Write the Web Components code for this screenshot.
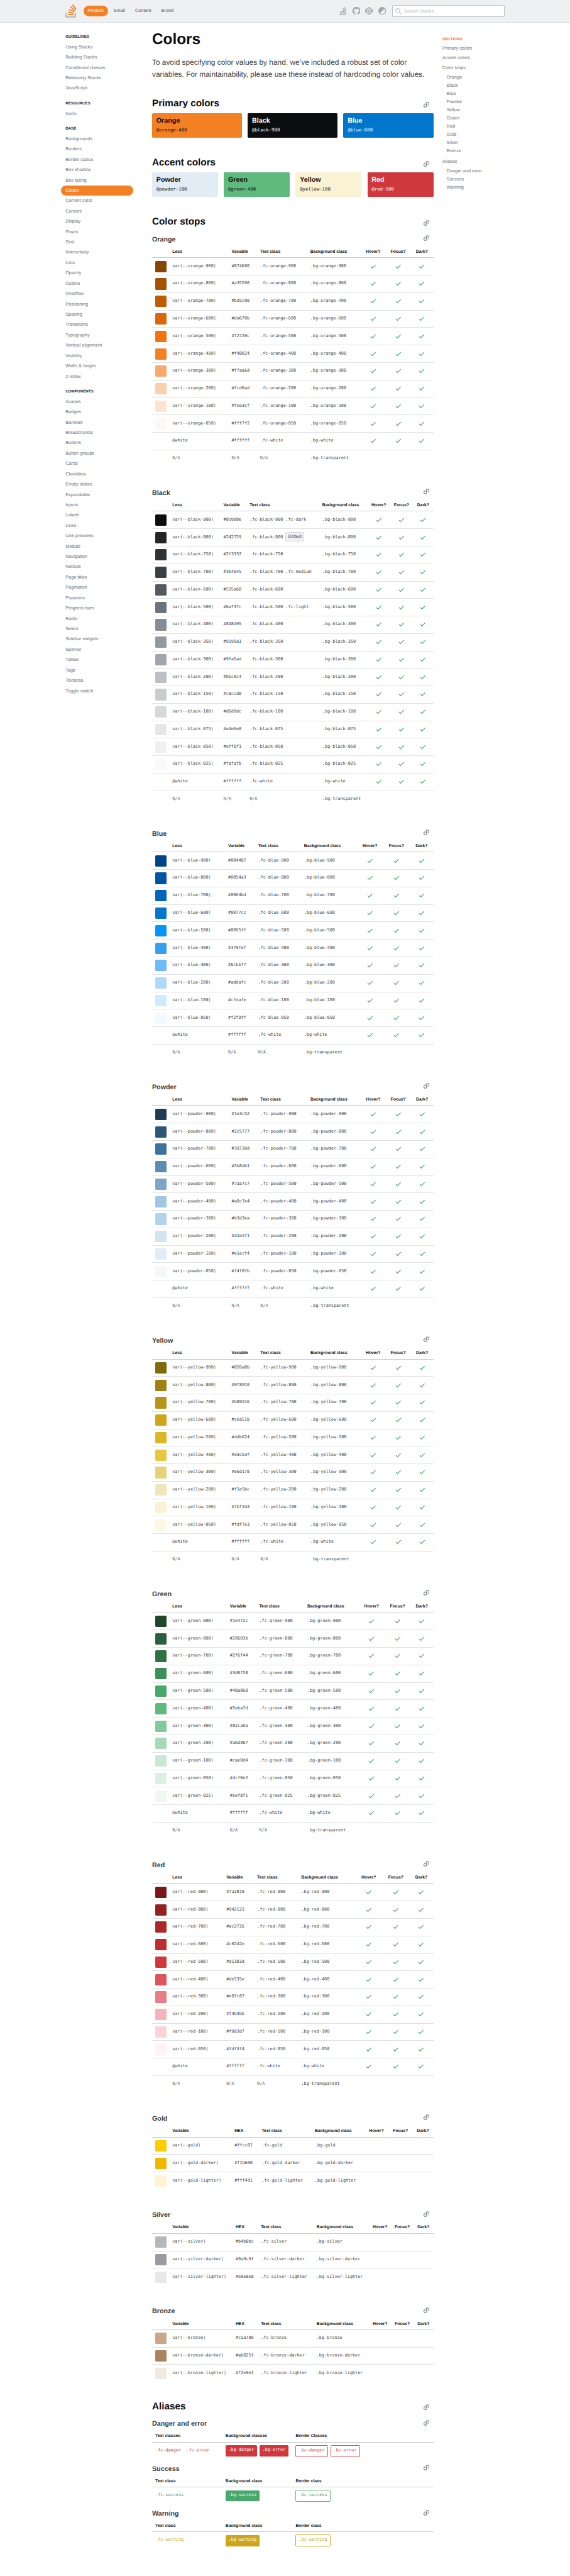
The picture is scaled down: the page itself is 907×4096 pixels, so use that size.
<!DOCTYPE html>
<html lang="en">
<head>
<meta charset="utf-8">
<title>Colors - Stacks</title>
<style>
html{background:#fff}
body{margin:0;font:13px/1.3 "Liberation Sans",Arial,sans-serif;color:#3b4045;text-rendering:geometricPrecision}
</style>
</head>
<body>
<stacks-page></stacks-page>
<script>
const SANS = '"Liberation Sans",Arial,sans-serif';
const MONO = '"DejaVu Sans Mono","Liberation Mono",monospace';
const LOOP = 'M13 9.700C15.500 7 15.800 4 13.600 2.200 11.300.400 8.600 1.400 7.100 3.800 5.700 6.300 6.300 8.700 8.800 9.700';
const LINK = `<svg width="16" height="16" viewBox="0 0 16 16" fill="none" stroke="#6a737c" stroke-width="1.9"><path d="${LOOP}"/><path transform="rotate(180 8 8)" d="${LOOP}"/></svg>`;
const CHECK = '<svg width="18" height="18" viewBox="0 0 18 18"><path fill="#48a868" d="M16 4.410L14.590 3 6 11.590 2.410 8 1 9.410l5 5 10-10z"/></svg>';

function define(name, render) {
  customElements.define(name, class extends HTMLElement {
    connectedCallback() {
      if (this.shadowRoot) return;
      const t = document.createElement('template');
      t.innerHTML = render(this);
      this.attachShadow({ mode: 'open' }).append(t.content.cloneNode(true));
    }
  });
}

/* Top bar */
define('stacks-topbar', () => `<style>
:host{display:flex;align-items:center;box-sizing:border-box;height:64px;background:#eff0f1;border-bottom:1px solid #d6d9dc;padding-left:183px}
.logo{display:block;width:32px;height:37px}
nav{display:flex;gap:4px;margin-left:19px}
nav a{font-size:13px;line-height:29px;padding:0 12px;border-radius:100px;color:#535a60}
nav a.on{background:#f48024;color:#fff}
.icons{display:flex;align-items:center;gap:14px;margin-left:auto}
.icons svg{display:block;width:22px;height:22px}
.search{display:flex;align-items:center;box-sizing:border-box;width:316px;height:33px;margin:0 184px 0 17px;border:1px solid #bbc0c4;border-radius:3px;background:#fff;padding-left:8px;gap:6px;color:#bbc0c4;font-size:13px}
</style>
<svg class="logo" viewBox="0 0 32 37"><path d="M26 33v-9h4v13H0V24h4v9h22z" fill="#BCBBBB"/><path d="M21.500 0l-2.700 2 9.900 13.300 2.700-2L21.500 0zM26 18.400L13.300 7.800l2.100-2.500 12.700 10.600-2.100 2.500zM9.100 15.200l15 7 1.400-3-15-7-1.400 3zm14 10.790l.680-2.950-16.100-3.350L7 23l16.100 2.990zM23 30H7v-3h16v3z" fill="#F48024"/></svg>
<nav><a class="on">Product</a><a>Email</a><a>Content</a><a>Brand</a></nav>
<div class="icons">
<svg viewBox="0.700 0.700 17.300 17.300" fill="#9fa6ad"><path d="M14 16v-5h2v7H2v-7h2v5h10z"/><path d="M12.090.720l-1.210.9 4.500 6.070 1.220-.9L12.090.710zM5 15h8v-2H5v2zm9.150-5.870L8.350 4.300l.960-1.160 5.800 4.830-.960 1.160zm-7.700-1.470l6.850 3.190.630-1.370-6.850-3.200-.630 1.380zm6.530 5L5.400 11.390l.380-1.670 7.420 1.480-.220 1.460z"/></svg>
<svg viewBox="1 1 16 16" fill="#9fa6ad"><path d="M9 1a8 8 0 00-2.530 15.590c.4.070.550-.170.550-.380l-.010-1.490c-2.010.370-2.530-.490-2.690-.940-.090-.230-.480-.940-.820-1.130-.280-.150-.680-.520-.010-.530.630-.010 1.080.580 1.230.820.720 1.210 1.870.870 2.330.660.070-.520.280-.870.510-1.070-1.780-.2-3.640-.890-3.640-3.950 0-.870.310-1.590.820-2.150-.080-.2-.360-1.020.080-2.120 0 0 .670-.210 2.200.820a7.420 7.420 0 014 0c1.530-1.040 2.200-.820 2.200-.820.440 1.100.160 1.920.080 2.120.510.560.820 1.270.820 2.150 0 3.070-1.870 3.750-3.650 3.950.290.250.540.730.540 1.480l-.010 2.200c0 .210.150.460.550.380A8.010 8.010 0 009 1z"/></svg>
<svg viewBox="0 0 22 22" fill="none" stroke="#9fa6ad" stroke-width="2" stroke-linejoin="round"><path d="M11 1.200L20.800 7.500v7L11 20.800 1.200 14.500v-7zM11 1.200v6.600M11 14.200v6.600M1.200 7.500l9.800 6.700 9.800-6.700M1.200 14.500L11 7.800l9.800 6.700"/></svg>
<svg viewBox="0 0 22 22" fill="#9fa6ad"><circle cx="11" cy="11" r="9.900" fill="none" stroke="#9fa6ad" stroke-width="2"/><path d="M4 18A9.900 9.900 0 0118 4z"/></svg>
</div>
<div class="search"><svg width="18" height="18" viewBox="0 0 18 18" fill="#bbc0c4"><path d="M18 16.500l-5.140-5.180h-.350a7 7 0 10-1.190 1.190v.350L16.500 18l1.500-1.500zM12 7A5 5 0 112 7a5 5 0 0110 0z"/></svg><span>Search Stacks…</span></div>`);

/* Left navigation: one titled group; the active entry is a pill */
define('nav-group', el => `<style>
:host{display:block}
h4{margin:0;padding:22px 12px 6px;font:bold 11px/14px ${SANS};color:#242729;text-transform:uppercase}
a{display:block;height:29px;line-height:29px;padding:0 12px;font-size:13px;color:#6a737c;border-radius:100px}
a.on{background:#f48024;color:#fff}
</style><h4>${el.getAttribute('label')}</h4>` +
  el.getAttribute('items').split(',').map(i => `<a${i === 'Colors' ? ' class="on"' : ''}>${i.replace('&', '&amp;')}</a>`).join(''));

/* Right table of contents */
define('page-toc', () => `<style>
:host{display:block;color:#6a737c;font-size:13px}
h4{margin:0 0 3.700px;font:bold 11px/14px ${SANS};color:#f2720c}
a{display:block;line-height:27px}
div{padding:2px 0 4px 12px}
div a{line-height:23px}
</style><h4>SECTIONS</h4><a>Primary colors</a><a>Accent colors</a><a>Color stops</a>
<div>${'Orange,Black,Blue,Powder,Yellow,Green,Red,Gold,Silver,Bronze'.split(',').map(t => `<a>${t}</a>`).join('')}</div>
<a>Aliases</a><div><a>Danger and error</a><a>Success</a><a>Warning</a></div>`);

/* Headings with an anchor link */
define('section-heading', () => `<style>
:host{display:flex;align-items:center;justify-content:space-between;height:30px;font:bold 27px/30px ${SANS};color:#0c0d0e;padding-right:11px}
:host([small]){height:20px;font-size:19px;line-height:20px;color:#3b4045}
svg{display:block;margin-top:4.500px}
:host([small]) svg{margin:0 0 9px}
</style><span><slot></slot></span>${LINK}`);

/* Large color card */
define('color-card', () => `<style>
:host{display:block;flex:1;box-sizing:border-box;height:69px;padding:11px 12px 0;border-radius:3px}
b{display:block;font:bold 19px/24px ${SANS}}
code{display:block;margin-top:3.500px;font:13px/20px ${MONO}}
</style><b><slot></slot></b><code><slot name="var"></slot></code>`);

/* Table of stops. cols: [variable, text class, background class, hover, focus, dark] x positions;
   the first three are left edges, the last three are column centers. */
const X0 = 427, X1 = 1217;
define('stop-table', el => {
  const name = el.getAttribute('name');
  const [v, t, b, h, f, d] = el.getAttribute('cols').split(' ').map(Number);
  const ds = 2 * d - X1, fs = 2 * f - ds, hs = 2 * h - fs;
  const cols = [57, v - X0 - 57, t - v, b - t, hs - b, fs - hs, ds - fs, X1 - ds].map(n => n.toFixed(1) + 'px').join(' ');
  const metal = el.hasAttribute('metal');
  const extra = { 'black-900': ' .fc-dark', 'black-700': ' .fc-medium', 'black-500': ' .fc-light', 'black-800': ' <span class="tag">Default</span>' };
  const checks = `<i>${CHECK}</i>`.repeat(3);
  let rows = el.getAttribute('stops').split(' ').map(s => {
    const [stop, hex] = s.split(':');
    const full = stop ? name + '-' + stop : name;
    return `<div class="row"><span class="sw" style="background:#${hex}"></span><code>var(--${full})</code><code>#${hex}</code><code>.fc-${full}${extra[full] || ''}</code><code>.bg-${full}</code>${metal ? '<i></i><i></i><i></i>' : checks}</div>`;
  }).join('');
  if (!metal) rows += `<div class="row"><span></span><code>@white</code><code>#ffffff</code><code>.fc-white</code><code>.bg-white</code>${checks}</div>
<div class="row"><span></span><code class="na">N/A</code><code class="na">N/A</code><code class="na">N/A</code><code>.bg-transparent</code><i></i><i></i><i></i></div>`;
  return `<style>
:host{display:block;margin:8.500px 0 62.900px}
.row{display:grid;grid-template-columns:${cols};align-items:center;box-sizing:border-box;height:49px;border-bottom:1px solid #e0e2e5}
.row:last-child{height:48px;border-bottom:0}
.row.head{height:33px;border-bottom-color:#c9cdd0;font:bold 12px/16px ${SANS};color:#0c0d0e}
.sw{width:32px;height:32px;margin-left:9px;border-radius:3px}
code{font:12px/16px ${MONO};color:#3b4045;padding-bottom:2px;white-space:pre}
code.na{color:#6a737c}
i{display:flex;justify-content:center}
.c{text-align:center}
svg{display:block}
.tag{display:inline-block;box-sizing:border-box;height:26px;margin:-6px 0;vertical-align:middle;font:12px/23px ${SANS};padding:0 5px;border:1px solid #d6d9dc;border-radius:3px;background:#eff0f1}
</style>
<div class="row head"><span></span><span>${metal ? 'Variable' : 'Less'}</span><span>${metal ? 'HEX' : 'Variable'}</span><span>Text class</span><span>Background class</span><span class="c">Hover?</span><span class="c">Focus?</span><span class="c">Dark?</span></div>${rows}`;
});

/* Alias table */
define('alias-table', el => {
  const names = el.getAttribute('names').split(' ');
  const [p, q, r] = el.getAttribute('heads').split(',');
  return `<style>
:host{display:block;margin:7.300px 0 17.500px}
.row{display:grid;grid-template-columns:197.300px 197px 1fr;padding-left:9px;align-items:center;box-sizing:border-box;height:48.200px}
.row.head{height:33px;border-bottom:1px solid #c9cdd0;font:bold 12px/16px ${SANS};color:#0c0d0e}
div div{display:flex;gap:7.200px;font:12px/28px ${MONO};color:${el.getAttribute('fc')}}
div .t{gap:15.200px;padding-bottom:2px}
.b span{background:${el.getAttribute('bg')};color:#fff;padding:0 8px 3px;border-radius:3px}
.o span{border:1px solid ${el.getAttribute('bc')};padding:0 7.200px 2px;border-radius:3px}
</style>
<div class="row head"><span>${p}</span><span>${q}</span><span>${r}</span></div>
<div class="row"><div class="t">${names.map(n => `<span>.fc-${n}</span>`).join('')}</div><div class="b">${names.map(n => `<span>.bg-${n}</span>`).join('')}</div><div class="o">${names.map(n => `<span>.bc-${n}</span>`).join('')}</div></div>`;
});

const TABLES = [
 ['Orange','650.3 730.3 871.300 1047.800 1118.300 1184.900','900:874600 800:a35200 700:bd5c00 600:da670b 500:f2720c 400:f48024 300:f7aa6d 200:fcd0ad 100:fee3cf 050:fff7f2'],
 ['Black','627.500 700.900 905 1063.500 1127.400 1188.400','900:0c0d0e 800:242729 750:2f3337 700:3b4045 600:535a60 500:6a737c 400:848d95 350:9199a1 300:9fa6ad 200:bbc0c4 150:c8ccd0 100:d6d9dc 075:e4e6e8 050:eff0f1 025:fafafb'],
 ['Blue','640.700 724.700 853.700 1039.100 1113.400 1183.900','900:004487 800:0054a3 700:0064bd 600:0077cc 500:0095ff 400:379fef 300:6cbbf7 200:addafc 100:cfeafe 050:f2f9ff'],
 ['Powder','650.400 731.200 872 1047.800 1118.300 1185.300','900:1e3c52 800:2c5777 700:39739d 600:5b8db1 500:7aa7c7 400:a0c7e4 300:b3d3ea 200:d1e5f1 100:e1ecf4 050:f4f8fb'],
 ['Yellow','650.400 731.200 872 1047.800 1118.300 1185.300','900:826a0b 800:9f8010 700:b89516 600:cea51b 500:ddb624 400:e9c63f 300:e6d178 200:f1e5bc 100:fbf2d4 050:fdf7e3'],
 ['Green','645.600 727.900 862.800 1043.500 1116.500 1184.500','900:1e472c 800:29603b 700:2f6f44 600:3d8f58 500:48a868 400:5eba7d 300:82ca9a 200:a6d9b7 100:cae8d4 050:dcf0e2 025:eef8f1'],
 ['Red','635.700 722 845.800 1035.300 1111.400 1183.300','900:7a1819 800:942121 700:ac2726 600:c02d2e 500:d1383d 400:de535e 300:e87c87 200:f4b4bb 100:f9d3d7 050:fdf3f4'],
 ['Gold','658.600 735 884 1057 1124.300 1187.600',':ffcc01 darker:f1b600 lighter:fff4d1'],
 ['Silver','661.700 732.800 889 1067 1129.700 1189.200',':b4b8bc darker:9a9c9f lighter:e8e8e8'],
 ['Bronze','661.700 732.800 889 1067 1129.700 1189.200',':caa789 darker:ab825f lighter:f2e9e1']
];
const card = (bg, fg, name, v) => `<color-card style="background:${bg};color:${fg}">${name}<span slot="var">${v}</span></color-card>`;

define('stacks-page', () => `<style>
:host{display:block;height:7220px;zoom:.5667}
.body{display:flex;align-items:flex-start}
.side{flex:none;width:203px;margin:11.800px 52.200px 0 171.800px}
main{flex:none;width:790px;display:flex;flex-direction:column}
page-toc{width:180px;margin:40px 0 0 25px}
h1{margin:22.200px 0 0;font:bold 43px/50px ${SANS};color:#0c0d0e}
p{margin:23.500px 0 50.200px;font-size:21px;line-height:33px;color:#3b4045;white-space:nowrap}
.cards{display:flex;gap:16px;margin:11.100px 0 55.900px}
.stops{margin-bottom:25px}
.aliases{margin:-9.900px 0 26px}
</style>
<stacks-topbar></stacks-topbar>
<div class="body">
<div class="side">
<nav-group label="Guidelines" items="Using Stacks,Building Stacks,Conditional classes,Releasing Stacks,JavaScript"></nav-group>
<nav-group label="Resources" items="Icons"></nav-group>
<nav-group label="Base" items="Backgrounds,Borders,Border radius,Box shadow,Box sizing,Colors,Current color,Cursors,Display,Floats,Grid,Interactivity,Lists,Opacity,Outline,Overflow,Positioning,Spacing,Transitions,Typography,Vertical alignment,Visibility,Width &amp; height,Z-index"></nav-group>
<nav-group label="Components" items="Avatars,Badges,Banners,Breadcrumbs,Buttons,Button groups,Cards,Checkbox,Empty states,Expandable,Inputs,Labels,Links,Link previews,Modals,Navigation,Notices,Page titles,Pagination,Popovers,Progress bars,Radio,Select,Sidebar widgets,Spinner,Tables,Tags,Textarea,Toggle switch"></nav-group>
</div>
<main>
<h1>Colors</h1>
<p>To avoid specifying color values by hand, we’ve included a robust set of color<br>variables. For maintainability, please use these instead of hardcoding color values.</p>
<section-heading>Primary colors</section-heading>
<div class="cards">${card('#f48024','#0c0d0e','Orange','@orange-400')}${card('#0c0d0e','#fff','Black','@black-900')}${card('#0077cc','#fff','Blue','@blue-600')}</div>
<section-heading>Accent colors</section-heading>
<div class="cards">${card('#e1ecf4','#0c0d0e','Powder','@powder-100')}${card('#5eba7d','#0c0d0e','Green','@green-400')}${card('#fbf2d4','#0c0d0e','Yellow','@yellow-100')}${card('#d1383d','#fff','Red','@red-500')}</div>
<section-heading class="stops">Color stops</section-heading>
${TABLES.map(([n, c, s]) => `<section-heading small>${n}</section-heading><stop-table name="${n.toLowerCase()}" cols="${c}" stops="${s}"${s[0] === ':' ? ' metal' : ''}></stop-table>`).join('')}
<section-heading class="aliases">Aliases</section-heading>
<section-heading small>Danger and error</section-heading>
<alias-table names="danger error" heads="Text classes,Background classes,Border Classes" fc="#d1383d" bg="#d1383d" bc="#de535e"></alias-table>
<section-heading small>Success</section-heading>
<alias-table names="success" heads="Text class,Background class,Border class" fc="#3d8f58" bg="#48a868" bc="#5eba7d"></alias-table>
<section-heading small>Warning</section-heading>
<alias-table names="warning" heads="Text class,Background class,Border class" fc="#cea51b" bg="#cea51b" bc="#cea51b"></alias-table>
</main>
<page-toc></page-toc>
</div>`);
</script>
</body>
</html>
